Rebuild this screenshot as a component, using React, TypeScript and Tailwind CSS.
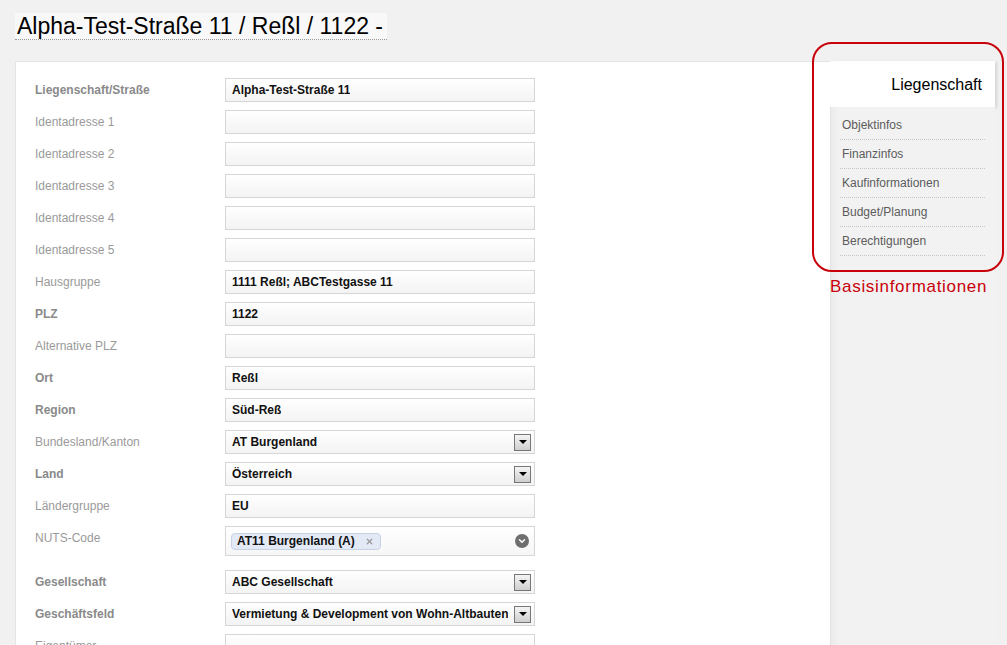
import { ChevronDown, X } from "lucide-react";

type Row = {
  label: string;
  value?: string;
  strong?: boolean;
  select?: boolean;
};

const rows: Row[] = [
  { label: "Liegenschaft/Straße", value: "Alpha-Test-Straße 11", strong: true },
  { label: "Identadresse 1" },
  { label: "Identadresse 2" },
  { label: "Identadresse 3" },
  { label: "Identadresse 4" },
  { label: "Identadresse 5" },
  { label: "Hausgruppe", value: "1111 Reßl; ABCTestgasse 11" },
  { label: "PLZ", value: "1122", strong: true },
  { label: "Alternative PLZ" },
  { label: "Ort", value: "Reßl", strong: true },
  { label: "Region", value: "Süd-Reß", strong: true },
  { label: "Bundesland/Kanton", value: "AT Burgenland", select: true },
  { label: "Land", value: "Österreich", strong: true, select: true },
  { label: "Ländergruppe", value: "EU" },
];

const rows2: Row[] = [
  { label: "Gesellschaft", value: "ABC Gesellschaft", strong: true, select: true },
  { label: "Geschäftsfeld", value: "Vermietung & Development von Wohn-Altbauten", strong: true, select: true },
  { label: "Eigentümer" },
];

const menu = ["Objektinfos", "Finanzinfos", "Kaufinformationen", "Budget/Planung", "Berechtigungen"];

function Label({ text, strong }: { text: string; strong?: boolean }) {
  return (
    <div
      className={`w-[190px] shrink-0 pt-[5px] text-[12px] leading-[14px] ${
        strong ? "font-bold text-[#8a8a8a]" : "text-[#9a9a9a]"
      }`}
    >
      {text}
    </div>
  );
}

function DropButton() {
  return (
    <div className="flex h-[17px] w-[17px] items-center justify-center border border-[#777] bg-gradient-to-b from-[#f4f4f4] to-[#cfcfcf]">
      <div className="h-0 w-0 border-x-[4px] border-t-[4px] border-x-transparent border-t-black" />
    </div>
  );
}

function FieldRow({ row }: { row: Row }) {
  return (
    <div className="mb-[8px] flex">
      <Label text={row.label} strong={row.strong} />
      <div className="flex h-[24px] w-[310px] items-center justify-between border border-[#d6d6d6] bg-gradient-to-b from-white to-[#f3f3f3] pl-[6px] pr-[3px]">
        <span className="truncate text-[12px] font-bold text-[#111]">{row.value}</span>
        {row.select && <DropButton />}
      </div>
    </div>
  );
}

export default function App() {
  return (
    <div className="relative h-[645px] overflow-hidden bg-[#f1f1f1] font-['Liberation_Sans',Arial,sans-serif]">
      <div className="flex px-[15px] pt-[13px]">
        <h1 className="border-b border-dotted border-[#999] bg-[#f8f8f8] pl-[2px] pr-[4px] text-[23px] leading-[26px] text-black">
          Alpha-Test-Straße 11 / Reßl / 1122 -
        </h1>
      </div>

      <div className="mt-[21px] flex pl-[15px]">
        <main className="h-[600px] w-[815px] shrink-0 border-l border-t border-[#e4e4e4] bg-white pl-[19px] pt-[16px]">
          {rows.map((r) => (
            <FieldRow key={r.label} row={r} />
          ))}

          <div className="mb-[14px] flex">
            <Label text="NUTS-Code" />
            <div className="flex h-[30px] w-[310px] items-center justify-between border border-[#d6d6d6] bg-gradient-to-b from-white to-[#f6f6f6] pl-[5px] pr-[5px]">
              <span className="flex h-[17px] items-center gap-[10px] rounded-[4px] border border-[#c6d3e6] bg-[#e3eaf6] pl-[5px] pr-[6px] text-[12px] font-bold text-[#111]">
                AT11 Burgenland (A)
                <X className="h-[9px] w-[9px] text-[#999]" strokeWidth={3.5} />
              </span>
              <span className="flex h-[14px] w-[14px] items-center justify-center rounded-full bg-[#6f6f6f]">
                <ChevronDown className="h-[10px] w-[10px] text-white" strokeWidth={3.5} />
              </span>
            </div>
          </div>

          {rows2.map((r) => (
            <FieldRow key={r.label} row={r} />
          ))}
        </main>

        <aside className="w-[165px] shrink-0">
          <div className="flex h-[46px] items-center justify-end bg-white pr-[13px] pt-[2px] text-[16px] text-black shadow-[2px_1px_3px_rgba(0,0,0,0.12)]">
            Liegenschaft
          </div>
          <div className="h-[560px] border-l border-[#e2e2e2] bg-gradient-to-r from-[#ebebeb] to-[#f2f2f2] to-[8px] pl-[9px] pr-[10px] pt-[4px]">
            {menu.map((m) => (
              <div
                key={m}
                className="flex h-[29px] items-center border-b border-dotted border-[#c8c8c8] pl-[2px] text-[12px] text-[#5c5c5c]"
              >
                {m}
              </div>
            ))}
          </div>
        </aside>
      </div>

      {/* annotation overlay */}
      <div className="pointer-events-none absolute left-[812px] top-[42px] h-[230px] w-[192px] rounded-[20px] border-2 border-[#c8000a]" />
      <div className="absolute left-[830px] top-[277px] text-[17px] leading-[20px] tracking-[0.7px] text-[#c8000a]">
        Basisinformationen
      </div>
    </div>
  );
}
